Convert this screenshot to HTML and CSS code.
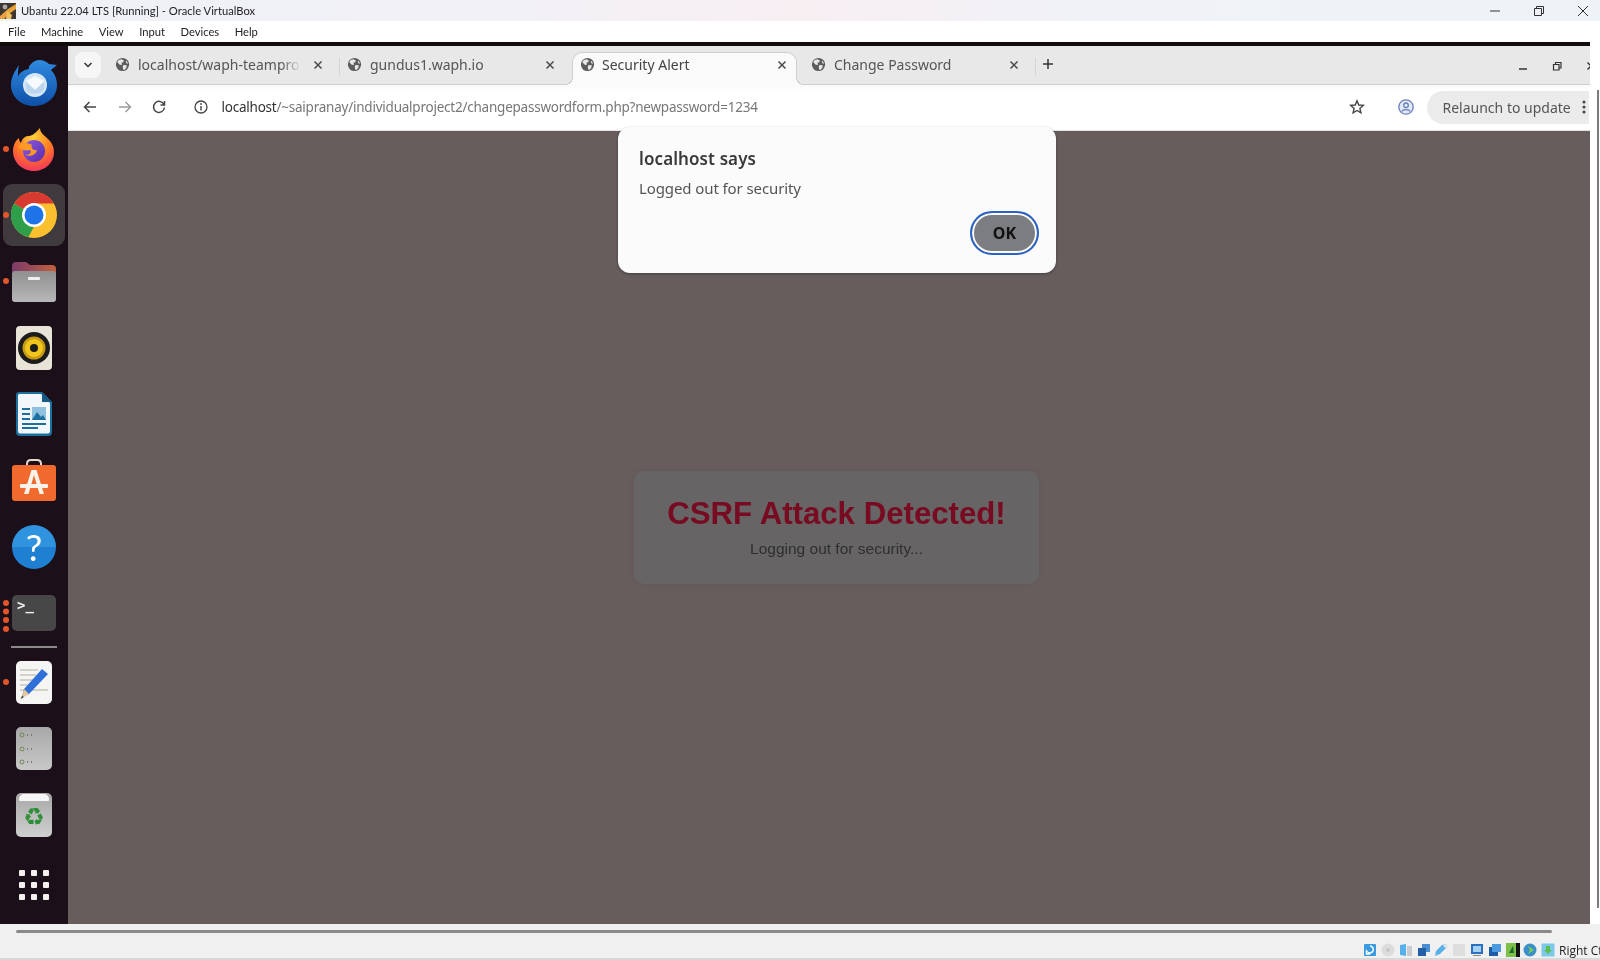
FILE: index.html
```html
<!DOCTYPE html>
<html lang="en">
<head>
<meta charset="utf-8">
<title>Ubantu 22.04 LTS [Running] - Oracle VirtualBox</title>
<link rel="stylesheet" href="styles.css">
</head>
<body>
<svg class="defs" width="0" height="0" aria-hidden="true">
  <defs>
    <symbol id="globe" viewBox="0 0 16 16">
      <circle cx="8" cy="8" r="7" fill="#5c5c5e"/>
      <path d="M4 3.2 7 2.4 9.4 3.6 8.8 5.6 6.8 6.2 7.6 8 5.4 8.6 3.2 6.4 2.4 5.4Z" fill="#e8e8e8"/>
      <path d="M9 8.4 12.6 8.8 12 11.6 9.8 13.8 8.8 13.4 8.2 10.6Z" fill="#e8e8e8"/>
      <path d="M11.4 3.8 13.2 5.4 13.8 7.2 12 6.6Z" fill="#e8e8e8"/>
    </symbol>
    <symbol id="x" viewBox="0 0 10 10">
      <path d="M1.5 1.5 8.5 8.5M8.5 1.5 1.5 8.5" stroke="#4a4a4a" stroke-width="1.5" fill="none"/>
    </symbol>
  </defs>
</svg>

<header class="titlebar">
  <svg class="vbox-logo" width="16" height="16" viewBox="0 0 16 16">
    <rect width="16" height="16" fill="#3b3630"/>
    <path d="M0 13 8 6 16 1V6L9 11 4 16H0Z" fill="#e9a23b"/>
    <path d="M7 8 12 12 11 16H6Z" fill="#f0c060"/>
    <circle cx="5" cy="4" r="2.4" fill="#a9a9a9"/>
  </svg>
  <span class="title-text">Ubantu 22.04 LTS [Running] - Oracle VirtualBox</span>
  <div class="win-buttons">
    <svg class="win-btn" width="12" height="12" viewBox="0 0 12 12"><path d="M1 6H11" stroke="#333" stroke-width="1"/></svg>
    <svg class="win-btn" width="12" height="12" viewBox="0 0 12 12"><path d="M1.5 3.5H8.5V10.5H1.5ZM3.5 3.5V1.5H10.5V8.5H8.5" stroke="#333" stroke-width="1" fill="none"/></svg>
    <svg class="win-btn" width="12" height="12" viewBox="0 0 12 12"><path d="M1 1 11 11M11 1 1 11" stroke="#333" stroke-width="1"/></svg>
  </div>
</header>

<nav class="menubar">
  <span class="menu-item">File</span>
  <span class="menu-item">Machine</span>
  <span class="menu-item">View</span>
  <span class="menu-item">Input</span>
  <span class="menu-item">Devices</span>
  <span class="menu-item">Help</span>
</nav>

<div class="vm">
  <div class="screen">
    <div class="topbar"></div>
    <div class="desktop">
      <aside class="dock">
        <div class="dock-item">
          <svg width="48" height="48" viewBox="0 0 48 48">
            <defs><linearGradient id="tb" x1="0" y1="0" x2="0" y2="1"><stop offset="0" stop-color="#2f8be0"/><stop offset="1" stop-color="#0f4fa8"/></linearGradient></defs>
            <path d="M9 6C5 12 1 18 1 26 1 38 11 47 24 47 37 47 47 38 47 26 47 20 45 15 41 11L47 6 39 5C35 1 29 0 25 2 21 4 18 8 19 10 13 11 9 14 8 18 8 14 8 10 9 6Z" fill="url(#tb)"/>
            <circle cx="25" cy="26" r="12" fill="#d6e6f5"/>
            <path d="M16 22 25 17 34 22 25 31Z" fill="#f7fbff"/>
            <path d="M16 23 25 31 34 23V31C31 36 19 36 16 31Z" fill="#bcd6ee"/>
          </svg>
        </div>
        <div class="dock-item running">
          <svg width="42" height="44" viewBox="0 0 42 44">
            <defs>
              <radialGradient id="ff" cx=".5" cy=".2" r=".9"><stop offset="0" stop-color="#ffd23a"/><stop offset=".5" stop-color="#ff7a22"/><stop offset="1" stop-color="#f0246e"/></radialGradient>
              <linearGradient id="ffp" x1="0" y1="0" x2="1" y2="1"><stop offset="0" stop-color="#8a5ce0"/><stop offset="1" stop-color="#5a2aa8"/></linearGradient>
            </defs>
            <path d="M27 1C27 6 31 8 35 12 40 17 41 21 41 25 41 36 32 44 21 44 9 44 0 35 0 24 0 19 2 14 6 11 6 14 7 15 8 16 9 12 12 9 15 9 18 9 21 8 27 1Z" fill="url(#ff)"/>
            <circle cx="21" cy="24" r="11" fill="url(#ffp)"/>
            <path d="M5 20C9 16 14 15 19 18 17 21 21 24 24 23 23 28 17 30 12 28 17 28 19 25 17 23 13 24 9 23 5 20Z" fill="#ff9a24"/>
          </svg>
        </div>
        <div class="dock-item running active">
          <svg width="46" height="46" viewBox="0 0 46 46">
            <circle cx="23" cy="23" r="23" fill="#fbc02d"/>
            <path d="M23 0A23 23 0 0 1 43 11.500H23A11.500 11.500 0 0 0 13 17.300L3 11.500A23 23 0 0 1 23 0Z" fill="#d93a2f"/>
            <path d="M3 11.500 13 17.300A11.500 11.500 0 0 0 23 34.500L17.300 45.300A23 23 0 0 1 3 11.500Z" fill="#2f9e4a"/>
            <circle cx="23" cy="23" r="12" fill="#fff"/>
            <circle cx="23" cy="23" r="9.500" fill="#1f73e8"/>
          </svg>
        </div>
        <div class="dock-item running">
          <svg width="44" height="40" viewBox="0 0 44 40">
            <defs><linearGradient id="fd" x1="0" y1="0" x2="1" y2="0"><stop offset="0" stop-color="#7a3a6a"/><stop offset="1" stop-color="#c4613e"/></linearGradient>
            <linearGradient id="fg" x1="0" y1="0" x2="0" y2="1"><stop offset="0" stop-color="#8f8f8f"/><stop offset="1" stop-color="#b8b8b8"/></linearGradient></defs>
            <path d="M0 4Q0 0 4 0H14L18 3H40Q44 3 44 7V14H0Z" fill="url(#fd)"/>
            <rect y="9" width="44" height="31" rx="3" fill="url(#fg)"/>
            <rect x="16" y="15" width="12" height="3" rx="1" fill="#f0f0f0"/>
          </svg>
        </div>
        <div class="dock-item">
          <svg width="36" height="44" viewBox="0 0 36 44">
            <rect width="36" height="44" rx="4" fill="#e8e4d8"/>
            <circle cx="18" cy="22" r="16" fill="#1c1c1c"/>
            <circle cx="18" cy="22" r="11.500" fill="#c79c14"/>
            <circle cx="18" cy="22" r="9" fill="#f0c61e"/>
            <circle cx="18" cy="22" r="4" fill="#1c1c1c"/>
          </svg>
        </div>
        <div class="dock-item">
          <svg width="36" height="44" viewBox="0 0 36 44">
            <path d="M3 0H26L36 10V40Q36 44 32 44H4Q0 44 0 40V3Q0 0 3 0Z" fill="#1c6f9e"/>
            <path d="M3 2H25L34 11V39Q34 41.500 32 41.500H4Q2 41.500 2 39V3Z" fill="#f2f7fb"/>
            <path d="M26 0 36 10H26Z" fill="#155a82"/>
            <rect x="6" y="16" width="8" height="2" fill="#1c6f9e"/>
            <rect x="6" y="21" width="8" height="2" fill="#1c6f9e"/>
            <rect x="6" y="26" width="8" height="2" fill="#1c6f9e"/>
            <rect x="6" y="31" width="24" height="2" fill="#1c6f9e"/>
            <rect x="6" y="35" width="16" height="2" fill="#1c6f9e"/>
            <rect x="16" y="15" width="14" height="13" fill="#8fc0e0"/>
            <path d="M16 28 21 20 25 25 27 23 30 28Z" fill="#1c6f9e"/>
          </svg>
        </div>
        <div class="dock-item">
          <svg width="44" height="42" viewBox="0 0 44 42">
            <path d="M15 8V5Q15 1 19 1H25Q29 1 29 5V8" fill="none" stroke="#e8d8cc" stroke-width="2"/>
            <rect y="6" width="44" height="36" rx="3" fill="#ef6a2c"/>
            <path d="M19.500 11H24.500L32 35H27.500L22 16 16.500 35H12Z" fill="#fdf2ea"/>
            <rect x="8" y="25" width="28" height="4" rx="1" fill="#fdf2ea"/>
          </svg>
        </div>
        <div class="dock-item">
          <div class="help-icon">?</div>
        </div>
        <div class="dock-item running-many">
          <div class="term-icon">&gt;_</div>
        </div>
        <div class="dock-sep"></div>
        <div class="dock-item running">
          <svg width="36" height="43" viewBox="0 0 36 43">
            <rect width="36" height="43" rx="5" fill="#f5f5f3"/>
            <path d="M4 9H22M4 14H20M4 19H18M4 24H16M4 29H32" stroke="#c9c6ba" stroke-width="1.500"/>
            <path d="M26 8 32 13 13 33 6 36 8 28Z" fill="#2f6fd8"/>
            <path d="M8 28 13 33 6 37Z" fill="#e6c79a"/>
            <path d="M6 35 8 36 4.500 38Z" fill="#333"/>
          </svg>
        </div>
        <div class="dock-item">
          <svg width="36" height="43" viewBox="0 0 36 43">
            <defs><linearGradient id="gt" x1="0" y1="0" x2="0" y2="1"><stop offset="0" stop-color="#a8a8a8"/><stop offset="1" stop-color="#c8c8c8"/></linearGradient></defs>
            <rect width="36" height="43" rx="5" fill="url(#gt)"/>
            <circle cx="6" cy="8" r="2" fill="none" stroke="#6e8a50"/><circle cx="6" cy="22" r="2" fill="none" stroke="#6e8a50"/><circle cx="6" cy="35" r="2" fill="none" stroke="#6e8a50"/>
            <path d="M11 8H12M15 8H16M11 22H12M15 22H16M11 35H12M15 35H16" stroke="#666" stroke-width="1.500"/>
          </svg>
        </div>
        <div class="dock-item">
          <div class="trash-icon"><span class="trash-lid"></span><span class="trash-glyph">♻</span></div>
        </div>
        <div class="dock-grid">
          <i></i><i></i><i></i><i></i><i></i><i></i><i></i><i></i><i></i>
        </div>
      </aside>

      <main class="browser">
        <div class="tabstrip">
          <button class="tab-list">
            <svg width="10" height="6" viewBox="0 0 10 6"><path d="M1.500 1 5 4.500 8.500 1" stroke="#333" stroke-width="1.500" fill="none"/></svg>
          </button>
          <div class="tab">
            <svg class="tab-globe" width="15" height="15"><use href="#globe"/></svg>
            <span class="tab-title fade">localhost/waph-teampro</span>
            <svg class="tab-close" width="10" height="10"><use href="#x"/></svg>
          </div>
          <div class="tab-divider"></div>
          <div class="tab">
            <svg class="tab-globe" width="15" height="15"><use href="#globe"/></svg>
            <span class="tab-title">gundus1.waph.io</span>
            <svg class="tab-close" width="10" height="10"><use href="#x"/></svg>
          </div>
          <div class="tab active">
            <svg class="tab-globe" width="15" height="15"><use href="#globe"/></svg>
            <span class="tab-title">Security Alert</span>
            <svg class="tab-close" width="10" height="10"><use href="#x"/></svg>
          </div>
          <div class="tab">
            <svg class="tab-globe" width="15" height="15"><use href="#globe"/></svg>
            <span class="tab-title">Change Password</span>
            <svg class="tab-close" width="10" height="10"><use href="#x"/></svg>
          </div>
          <div class="tab-divider"></div>
          <svg class="tab-new" width="12" height="12" viewBox="0 0 12 12"><path d="M6 1V11M1 6H11" stroke="#333" stroke-width="1.500"/></svg>
          <div class="chrome-btns">
            <svg width="10" height="10" viewBox="0 0 10 10"><path d="M1 8H9" stroke="#333" stroke-width="1.500"/></svg>
            <svg width="10" height="10" viewBox="0 0 10 10"><path d="M1.500 3.500H7V9H1.500ZM3.500 3.500V1.500H9V7H7" stroke="#333" stroke-width="1.200" fill="none"/></svg>
            <svg width="10" height="10" viewBox="0 0 10 10"><path d="M1.500 1.500 8.500 8.500M8.500 1.500 1.500 8.500" stroke="#333" stroke-width="1.300"/></svg>
          </div>
        </div>

        <div class="toolbar">
          <svg class="nav-icon" width="16" height="16" viewBox="0 0 16 16"><path d="M14 8H2.500M7.500 3 2.500 8 7.500 13" stroke="#444" stroke-width="1.500" fill="none"/></svg>
          <svg class="nav-icon" width="16" height="16" viewBox="0 0 16 16"><path d="M2 8H13.500M8.500 3 13.500 8 8.500 13" stroke="#9a9a9a" stroke-width="1.500" fill="none"/></svg>
          <svg class="nav-icon" width="16" height="16" viewBox="0 0 16 16"><path d="M13 5.500A5.500 5.500 0 1 0 13.500 8.500M13.500 2V6H9.500" stroke="#444" stroke-width="1.500" fill="none"/></svg>
          <div class="omnibox">
            <svg width="14" height="14" viewBox="0 0 14 14"><circle cx="7" cy="7" r="6" stroke="#444" stroke-width="1.300" fill="none"/><path d="M7 6V10.500" stroke="#444" stroke-width="1.400"/><circle cx="7" cy="4" r=".9" fill="#444"/></svg>
            <span class="url"><span class="url-host">localhost</span>/~saipranay/individualproject2/changepasswordform.php?newpassword=1234</span>
            <svg class="star" width="16" height="16" viewBox="0 0 16 16"><path d="M8 1.800 9.800 6 14.300 6.400 10.900 9.400 11.900 13.800 8 11.500 4.100 13.800 5.100 9.400 1.700 6.400 6.200 6Z" stroke="#444" stroke-width="1.400" fill="none"/></svg>
          </div>
          <svg class="profile" width="16" height="16" viewBox="0 0 16 16"><circle cx="8" cy="8" r="7.200" stroke="#6a80bc" stroke-width="1.300" fill="#e2e8f6"/><circle cx="8" cy="6.300" r="2.300" stroke="#6a80bc" stroke-width="1.300" fill="none"/><path d="M3.500 12.500C5 10 11 10 12.500 12.500" stroke="#6a80bc" stroke-width="1.300" fill="none"/></svg>
          <div class="relaunch">
            <span class="relaunch-text">Relaunch to update</span>
            <svg width="4" height="14" viewBox="0 0 4 14"><circle cx="2" cy="2" r="1.500" fill="#444"/><circle cx="2" cy="7" r="1.500" fill="#444"/><circle cx="2" cy="12" r="1.500" fill="#444"/></svg>
          </div>
        </div>

        <div class="page">
          <section class="card">
            <h1 class="card-title">CSRF Attack Detected!</h1>
            <p class="card-text">Logging out for security...</p>
          </section>
          <div class="dialog">
            <div class="dialog-title">localhost says</div>
            <div class="dialog-body">Logged out for security</div>
            <div class="dialog-actions">
              <button class="dialog-ok">OK</button>
            </div>
          </div>
        </div>
      </main>
    </div>
  </div>
  <div class="vscroll"><div class="vscroll-thumb"></div></div>
</div>

<div class="hscroll"><div class="hscroll-thumb"></div></div>

<footer class="statusbar">
  <svg class="st" viewBox="0 0 14 14"><rect x="1" y="1" width="12" height="12" rx="1" fill="#3a9ae0"/><path d="M7 3A3.500 3.500 0 1 1 5 9.500L6 11H3.500V8L4.500 9" stroke="#fff" stroke-width="1.500" fill="none"/></svg>
  <svg class="st" viewBox="0 0 14 14"><circle cx="7" cy="7" r="6.500" fill="#dcdcdc"/><circle cx="7" cy="7" r="1.800" fill="#c4c4c4"/></svg>
  <svg class="st" viewBox="0 0 14 14"><path d="M1 2 7 1V13L1 12Z" fill="#58b0ea"/><rect x="8" y="3" width="5" height="10" fill="#c8ccd0"/></svg>
  <svg class="st" viewBox="0 0 14 14"><rect x="5" y="1" width="8" height="8" fill="#4a90d0"/><rect x="1" y="5" width="8" height="8" fill="#2060a8"/></svg>
  <svg class="st" viewBox="0 0 14 14"><path d="M1 13 2 8 8 2 12 1 13 4 6 11Z" fill="#58b0ea"/><path d="M9 2 12 1 13 4 11 5Z" fill="#e8e8e8"/></svg>
  <svg class="st" viewBox="0 0 14 14"><rect x="1" y="1" width="12" height="12" fill="#dedede"/></svg>
  <svg class="st" viewBox="0 0 14 14"><rect x="1" y="1" width="12" height="10" fill="#2a70c0"/><rect x="3" y="3" width="8" height="6" fill="#a8d0f0"/><rect x="3" y="12" width="8" height="1" fill="#888"/></svg>
  <svg class="st" viewBox="0 0 14 14"><rect x="1" y="4" width="9" height="9" fill="#1c5ca8"/><rect x="4" y="1" width="9" height="8" fill="#4a9ae0"/></svg>
  <svg class="st" viewBox="0 0 14 14"><rect width="10" height="14" fill="#7cc04a"/><rect x="10" width="4" height="14" fill="#111"/><path d="M3 10 7 3 8 10Z" fill="#1c6a2a"/></svg>
  <svg class="st" viewBox="0 0 14 14"><circle cx="7" cy="7" r="6.500" fill="#3a90c8"/><path d="M5 3 11 7 5 11 7 7Z" fill="#7cd04a"/></svg>
  <svg class="st" viewBox="0 0 14 14"><rect x=".5" y=".5" width="13" height="13" rx="1" fill="#7cc8ea"/><path d="M5 3H9V7H11L7 11 3 7H5Z" fill="#58c048"/></svg>
  <span class="host-key">Right Ctrl</span>
</footer>
</body>
</html>
```

FILE: styles.css
```css
* { box-sizing: border-box; }
html, body { margin: 0; padding: 0; }
body {
  width: 1600px;
  height: 960px;
  overflow: hidden;
  display: flex;
  flex-direction: column;
  background: #f0f0f0;
  font-family: "Open Sans", "Noto Sans", sans-serif;
  filter: blur(.3px);
}
.defs { position: absolute; }

/* VirtualBox window */
.titlebar {
  height: 21px;
  flex: none;
  display: flex;
  align-items: center;
  background: linear-gradient(90deg, #eff1f7 0%, #f1f1f6 30%, #f7eef2 50%, #f0f2f7 68%, #eef3f8 100%);
  color: #222;
  font-family: Lato, "Noto Sans", sans-serif;
  font-size: 11.200px;
}
.vbox-logo { margin-right: 5px; flex: none; }
.win-buttons { margin-left: auto; display: flex; gap: 32px; padding-right: 11px; }
.menubar {
  height: 21px;
  flex: none;
  display: flex;
  align-items: center;
  background: #fff;
  padding-left: 8px;
  gap: 15.500px;
  font-family: Lato, "Noto Sans", sans-serif;
  font-size: 11.200px;
  color: #222;
}

.vm { flex: 1; display: flex; min-height: 0; background: #fff; }
.screen { width: 1590px; display: flex; flex-direction: column; }
.topbar { height: 4px; background: #100c0c; flex: none; }
.desktop { flex: 1; display: flex; min-height: 0; }
.vscroll { flex: 1; padding: 48px 1px 16px 7px; }
.vscroll-thumb { width: 2px; height: 100%; background: #7c7c7c; }

/* Dock */
.dock {
  width: 68px;
  flex: none;
  background: #1b0f19;
  display: flex;
  flex-direction: column;
  align-items: center;
  padding-top: 3.500px;
}
.dock-item {
  height: 66.300px;
  width: 100%;
  flex: none;
  display: flex;
  align-items: center;
  justify-content: center;
  position: relative;
}
.dock-item.active::before {
  content: "";
  position: absolute;
  left: 3px;
  top: 2px;
  width: 62px;
  height: 62px;
  border-radius: 9px;
  background: #3e3a3d;
}
.dock-item svg, .dock-item > div { position: relative; }
.running::after {
  content: "";
  position: absolute;
  left: 3px;
  top: 30px;
  width: 6px;
  height: 6px;
  border-radius: 50%;
  background: #e2562a;
}
.running-many::after {
  content: "";
  position: absolute;
  left: 3px;
  top: 20px;
  width: 6px;
  height: 6px;
  border-radius: 50%;
  background: #e2562a;
  box-shadow: 0 8.500px 0 #e2562a, 0 17px 0 #e2562a, 0 26px 0 #e2562a;
}
.help-icon {
  width: 44px;
  height: 44px;
  border-radius: 50%;
  background: linear-gradient(#2f93e0 50%, #1f7fd0 50%);
  color: #fff;
  font: 400 37px/44px Lato, sans-serif;
  text-align: center;
}
.term-icon {
  width: 44px;
  height: 36px;
  border-radius: 5px;
  background: #474747;
  color: #f2f2f2;
  font: 700 14px/18px "DejaVu Sans Mono", monospace;
  padding: 1px 0 0 5px;
}
.dock-sep { width: 46px; height: 2px; background: #8e8a8c; margin: 0 0 1px; flex: none; }
.trash-icon {
  width: 36px;
  height: 44px;
  border-radius: 5px;
  background: linear-gradient(#a8a8a8, #cfcfcf);
  display: flex;
  flex-direction: column;
  align-items: center;
}
.trash-lid { width: 30px; height: 7px; margin-top: 1px; background: #f6f6f6; border-radius: 5px 5px 1px 1px; }
.trash-glyph { color: #2f8f38; font: 24px/32px "DejaVu Sans", sans-serif; }
.dock-grid {
  margin-top: 22px;
  display: grid;
  grid-template-columns: repeat(3, 6px);
  grid-auto-rows: 6px;
  gap: 6px;
}
.dock-grid i { background: #f4f0f0; border-radius: 1px; }

/* Browser */
.browser { flex: 1; display: flex; flex-direction: column; min-width: 0; overflow: hidden; }
.tabstrip {
  height: 39px;
  flex: none;
  display: flex;
  align-items: flex-start;
  background: #e8e8e8;
  border-bottom: 1px solid #cfcfcf;
  padding: 6px 0 0 7px;
  color: #555;
  font-family: "Noto Sans", sans-serif;
  font-size: 14px;
  position: relative;
}
.tab-list {
  width: 26px;
  height: 26px;
  margin-right: 6px;
  padding: 0;
  border: 0;
  border-radius: 8px;
  background: #f6f6f6;
  display: flex;
  align-items: center;
  justify-content: center;
  flex: none;
}
.tab {
  width: 232px;
  height: 33px;
  flex: none;
  display: flex;
  align-items: center;
  padding: 0 0 8px 8px;
  position: relative;
}
.tab.active {
  background: #fafafa;
  border: 1px solid #cfcfcf;
  border-bottom: 0;
  border-radius: 10px 10px 0 0;
  width: 225px;
  margin: 0 6px 0 1px;
  padding: 0 0 9px 7px;
  color: #444;
  z-index: 1;
}
.tab.active::before,
.tab.active::after {
  content: "";
  position: absolute;
  bottom: 0;
  width: 8px;
  height: 8px;
}
.tab.active::before {
  left: -8px;
  background: radial-gradient(circle at 0 0, transparent 7px, #cfcfcf 7px, #cfcfcf 8px, #fafafa 8px);
}
.tab.active::after {
  right: -8px;
  background: radial-gradient(circle at 100% 0, transparent 7px, #cfcfcf 7px, #cfcfcf 8px, #fafafa 8px);
}
.tab-globe { flex: none; margin-right: 8px; }
.active .tab-globe { margin-right: 7px; }
.tab-title { flex: 1; min-width: 0; white-space: nowrap; overflow: hidden; }
.tab-title.fade { -webkit-mask-image: linear-gradient(90deg, #000 88%, transparent 100%); mask-image: linear-gradient(90deg, #000 88%, transparent 100%); }
.tab-close { flex: none; margin: 0 16px 0 12px; }
.active .tab-close { margin-right: 9px; }
.tab-divider { width: 1px; height: 18px; margin: 6px -1px 0 0; background: #d4d4d4; flex: none; }
.tab-new { margin: 6px 0 0 7px; flex: none; }
.chrome-btns { margin: 9px -6px 0 auto; display: flex; gap: 24px; }

.toolbar {
  height: 46px;
  flex: none;
  display: flex;
  align-items: center;
  background: linear-gradient(#f9f9f9 0, #fff 6px);
  border-bottom: 1px solid #e4e4e4;
  padding: 0 0 1px 14px;
  color: #444;
}
.nav-icon { flex: none; margin-right: 18.500px; }
.omnibox {
  width: 1193px;
  height: 33px;
  flex: none;
  display: flex;
  align-items: center;
  padding: 0 14px 0 8px;
  border-radius: 17px;
  background: #fff;
}
.url {
  margin-left: 14px;
  flex: 1;
  color: #777;
  font-family: "Noto Sans", sans-serif;
  font-size: 13.500px;
  letter-spacing: -.23px;
  white-space: nowrap;
}
.url-host { color: #333; }
.star { flex: none; }
.profile { flex: none; margin-left: 19px; }
.relaunch {
  margin-left: 13px;
  width: 162px;
  height: 33px;
  flex: none;
  display: flex;
  align-items: center;
  padding-left: 16px;
  border-radius: 17px 0 0 17px;
  background: #ebebeb;
  color: #555;
  font-family: "Noto Sans", sans-serif;
  font-size: 14px;
  white-space: nowrap;
}
.relaunch-text { margin-right: 11px; }

.page {
  flex: 1;
  position: relative;
  display: flex;
  flex-direction: column;
  align-items: center;
  background: #675d5d;
  padding: 340px 0 0 15px;
}
.card {
  width: 405px;
  height: 113px;
  padding: 24px 0 0;
  border-radius: 10px;
  background: #666464;
  box-shadow: 0 0 6px rgba(0, 0, 0, .06);
  text-align: center;
  font-family: "Liberation Sans", Arial, sans-serif;
}
.card-title { margin: 0; font-size: 31.200px; line-height: 37px; font-weight: 700; color: #780a22; }
.card-text { margin: 8px 0 0; font-size: 15.500px; line-height: 18px; color: #2f2f2f; }

.dialog {
  position: absolute;
  left: 550px;
  top: -4px;
  width: 438px;
  height: 146px;
  padding: 21px 17px 0 21px;
  border-radius: 12px;
  background: #fbfbfb;
  box-shadow: 0 1px 3px rgba(0, 0, 0, .35);
  font-family: "Noto Sans", sans-serif;
}
.dialog-title { font-size: 17px; line-height: 22px; font-weight: 600; color: #3a3a3a; letter-spacing: .1px; }
.dialog-body { margin-top: 7px; font-size: 15px; line-height: 22px; color: #555; letter-spacing: -.1px; }
.dialog-actions { display: flex; justify-content: flex-end; margin-top: 12px; }
.dialog-ok {
  width: 69px;
  height: 44px;
  padding: 0;
  border: 2px solid #2a62c4;
  border-radius: 22px;
  background: #7b7d80;
  box-shadow: inset 0 0 0 2px #fbfbfb;
  color: #111;
  font: 700 16px "Noto Sans", sans-serif;
}

/* Bottom of the VirtualBox window */
.hscroll { height: 9px; flex: none; padding: 6px 48px 0 16px; background: #f0f0f0; }
.hscroll-thumb { height: 3px; background: #8a8a8a; border-radius: 2px; }
.statusbar {
  height: 27px;
  flex: none;
  display: flex;
  align-items: flex-start;
  justify-content: flex-end;
  padding: 10px 0 0 0;
  gap: 3.800px;
  background: #f0f0f0;
  border-bottom: 2px solid #d8d8d8;
  overflow: hidden;
}
.st { width: 14px; height: 14px; flex: none; }
.host-key {
  width: 41px;
  flex: none;
  white-space: nowrap;
  font-family: "Open Sans", sans-serif;
  font-size: 12px;
  line-height: 15px;
  color: #222;
}
```
